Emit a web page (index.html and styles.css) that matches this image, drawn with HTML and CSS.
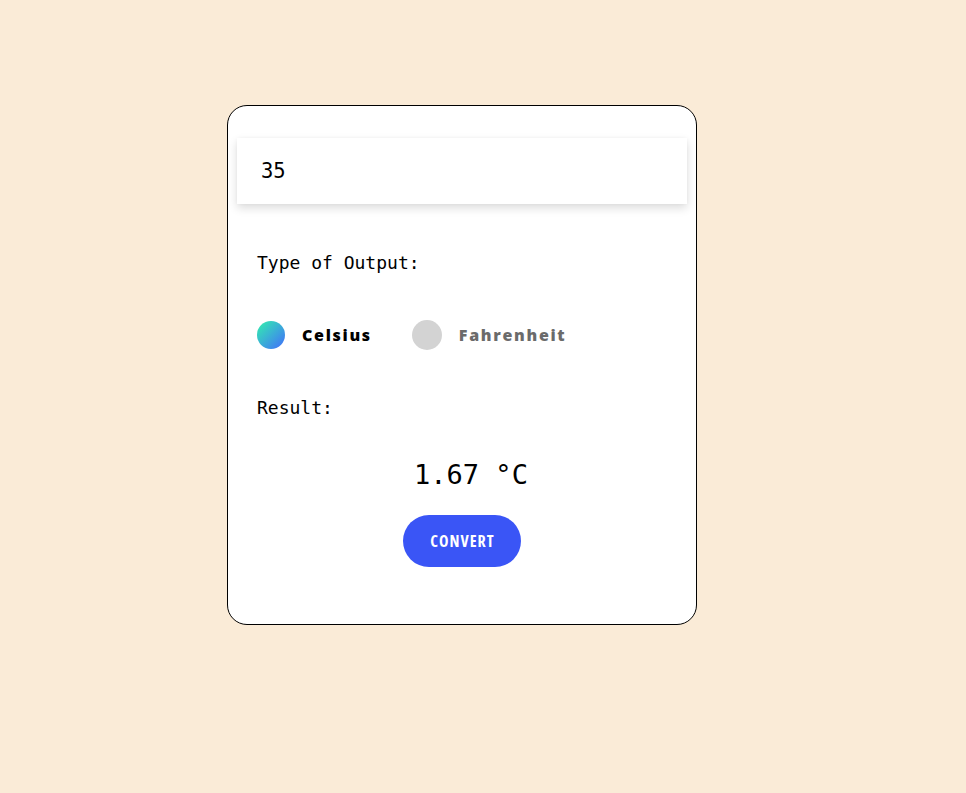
FILE: index.html
```html
<!DOCTYPE html>
<html>
<head>
<meta charset="utf-8">
<link rel="stylesheet" href="styles.css">
</head>
<body>
<div class="card">
  <div class="input-box"><span class="input-value">35</span></div>
  <div class="section">
    <div class="label label-type">Type of Output:</div>
    <div class="radios">
      <div class="radio">
        <span class="dot dot-active"></span>
        <span class="radio-text active">Celsius</span>
      </div>
      <div class="radio">
        <span class="dot dot-idle"></span>
        <span class="radio-text idle">Fahrenheit</span>
      </div>
    </div>
    <div class="label label-result">Result:</div>
  </div>
  <div class="result">1.67 °C</div>
  <div class="btn-row"><button class="btn">CONVERT</button></div>
</div>
</body>
</html>
```

FILE: styles.css
```css
html, body {
  margin: 0;
  padding: 0;
}
body {
  background: #faebd7;
  padding: 105px 0 0 227px;
  font-family: "DejaVu Sans Mono", monospace;
  color: #000;
}
.card {
  box-sizing: border-box;
  width: 470px;
  height: 520px;
  border: 1px solid #000;
  border-radius: 20px;
  background: #fff;
  padding: 32px 9px 0 9px;
}
.input-box {
  height: 66px;
  background: #fff;
  box-shadow: 0 4px 9px rgba(0, 0, 0, 0.14), 0 0 3px rgba(0,0,0,0.03);
  display: flex;
  align-items: center;
  padding-left: 24px;
}
.input-value {
  font-size: 20.5px;
  line-height: 1;
  padding-top: 1px;
}
.section {
  padding-left: 20px;
}
.label {
  font-size: 18px;
  line-height: 24px;
}
.label-type {
  margin-top: 47px;
}
.radios {
  margin-top: 45px;
  display: flex;
  align-items: center;
  height: 30px;
  gap: 40px;
}
.radio {
  display: flex;
  align-items: center;
}
.dot {
  display: block;
  border-radius: 50%;
}
.dot-active {
  width: 28px;
  height: 28px;
  background: linear-gradient(135deg, #33e4b4 10%, #3aafd6 50%, #4079f4 90%);
}
.dot-idle {
  width: 30px;
  height: 30px;
  background: #d3d3d3;
}
.radio-text {
  font-family: "Open Sans", sans-serif;
  font-weight: 800;
  font-size: 16px;
  letter-spacing: 1.7px;
}
.active {
  margin-left: 17px;
  color: #000;
}
.idle {
  margin-left: 17px;
  color: #6b6b6b;
}
.label-result {
  margin-top: 46px;
}
.result {
  margin-top: 38px;
  font-size: 27px;
  line-height: 34px;
  text-align: center;
  padding-left: 18px;
}
.btn-row {
  margin-top: 23px;
  display: flex;
  justify-content: center;
}
.btn {
  width: 118px;
  height: 52px;
  border: none;
  border-radius: 26px;
  background: #3a55f6;
  color: #fff;
  font-family: "Open Sans", sans-serif;
  font-weight: 700;
  font-size: 16px;
  font-stretch: 87.5%;
  letter-spacing: 1px;
  text-indent: 1px;
  cursor: pointer;
}
```
